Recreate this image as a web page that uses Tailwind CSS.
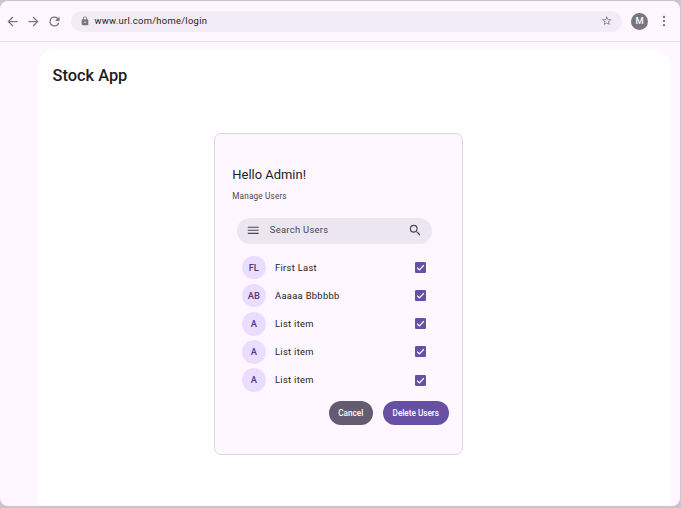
<!DOCTYPE html>
<html lang="en">
<head>
<meta charset="utf-8">
<title>Stock App</title>
<script src="https://cdn.jsdelivr.net/npm/@tailwindcss/browser@4"></script>
</head>
<body class="h-[508px] w-[681px] overflow-hidden bg-[#cac4d0] pt-px font-['Roboto',sans-serif] text-[#1d1b20]">
<div class="flex h-[505px] w-[680px] flex-col overflow-hidden rounded-[8px] bg-[#fef7ff]">
  <header class="flex h-[41px] shrink-0 items-center border-b border-[#e3dce8] pl-[5px] text-[#79747e]">
    <svg class="size-[15px]" viewBox="0 0 24 24" fill="currentColor"><path d="M20 11H7.83l5.59-5.59L12 4l-8 8 8 8 1.41-1.41L7.83 13H20z"/></svg>
    <svg class="ml-[6px] size-[15px]" viewBox="0 0 24 24" fill="currentColor"><path d="m12 4-1.41 1.41L16.17 11H4v2h12.17l-5.58 5.59L12 20l8-8z"/></svg>
    <svg class="ml-[6px] size-[15px]" viewBox="0 0 24 24" fill="currentColor"><path d="M17.65 6.35A7.96 7.96 0 0 0 12 4a8 8 0 1 0 7.73 10h-2.08A6 6 0 1 1 12 6c1.66 0 3.14.69 4.22 1.78L13 11h7V4z"/></svg>
    <div class="ml-[9px] flex h-[21px] w-[551px] items-center rounded-full bg-[#f2ecf6] pr-[9.5px] pl-[9px]">
      <svg class="size-[10px]" viewBox="0 0 24 24" fill="currentColor"><path fill-rule="evenodd" d="M18 8h-1V6A5 5 0 0 0 7 6v2H6a2 2 0 0 0-2 2v10c0 1.1.9 2 2 2h12a2 2 0 0 0 2-2V10a2 2 0 0 0-2-2zm-6 9a2 2 0 1 1 0-4 2 2 0 0 1 0 4zm3.1-9H8.9V6a3.1 3.1 0 0 1 6.2 0z"/></svg>
      <span class="ml-[4.4px] text-[9.4px] leading-none tracking-[0.29px] text-[#1d1b20]">www.url.com/home/login</span>
      <svg class="ml-auto size-[11.5px]" viewBox="0 0 24 24" fill="currentColor"><path d="m22 9.24-7.19-.62L12 2 9.19 8.63 2 9.24l5.46 4.73L5.82 21 12 17.27 18.18 21l-1.63-7.03zM12 15.4l-3.76 2.27 1-4.28-3.32-2.88 4.38-.38L12 6.1l1.71 4.04 4.38.38-3.32 2.88 1 4.28z"/></svg>
    </div>
    <div class="ml-[9px] flex size-[17px] items-center justify-center rounded-full bg-[#79747e] text-[9.4px] leading-none font-medium text-[#fef7ff]">M</div>
    <svg class="ml-[9px] size-[14px]" viewBox="0 0 24 24" fill="currentColor"><circle cx="12" cy="5" r="2"/><circle cx="12" cy="12" r="2"/><circle cx="12" cy="19" r="2"/></svg>
  </header>
  <main class="mt-[7px] mr-[9px] ml-[38px] flex h-[456px] flex-col rounded-t-[17px] rounded-b-[3px] bg-white">
    <h1 class="mt-[15px] ml-[14.5px] text-[16.4px] leading-[24px] font-medium">Stock App</h1>
    <section class="mt-[45px] ml-[176px] flex h-[322px] w-[249px] flex-col rounded-[7px] border border-[#ddd6e2] bg-[#fef7ff] pt-[32px]">
      <h2 class="ml-[17.3px] text-[12.95px] leading-[18px]">Hello Admin!</h2>
      <p class="ml-[17.3px] mt-[6px] text-[8.2px] leading-[12px] tracking-[0.17px] text-[#49454f]">Manage Users</p>
      <div class="mt-[15.5px] ml-[22px] flex h-[26px] w-[194.5px] items-center rounded-full bg-[#ece6f0] pr-[9.5px] pl-[9px] text-[#49454f]">
        <svg class="size-[14.5px]" viewBox="0 0 24 24" fill="currentColor"><path d="M3 18h18v-2H3zm0-5h18v-2H3zm0-7v2h18V6z"/></svg>
        <span class="ml-[9.3px] pb-px text-[9.4px] leading-none tracking-[0.3px]">Search Users</span>
        <svg class="ml-auto size-[14.5px]" viewBox="0 0 24 24" fill="currentColor"><path d="M15.5 14h-.79l-.28-.27A6.471 6.471 0 0 0 16 9.5 6.5 6.5 0 1 0 9.5 16c1.61 0 3.09-.59 4.23-1.57l.27.28v.79l5 4.99L20.49 19zm-6 0a4.5 4.5 0 1 1 0-9 4.5 4.5 0 0 1 0 9z"/></svg>
      </div>
      <ul id="users" class="mt-[10px] ml-[27px] w-[184px]"></ul>
      <div class="mt-[7.2px] mr-[13px] flex justify-end gap-[9.5px] text-[8.2px] font-medium text-white">
        <button class="h-[24px] w-[44.5px] rounded-full bg-[#625b71] leading-none">Cancel</button>
        <button class="h-[24px] w-[66.5px] rounded-full bg-[#6750a4] leading-none">Delete Users</button>
      </div>
    </section>
  </main>
</div>
<script>
const users = [['FL', 'First Last'], ['AB', 'Aaaaa Bbbbbb'], ['A', 'List item'], ['A', 'List item'], ['A', 'List item']];
document.getElementById('users').innerHTML = users.map(([initials, name]) => `
  <li class="flex h-[28.15px] items-center">
    <span class="flex size-[23.5px] items-center justify-center rounded-full bg-[#eaddff] text-[9.4px] leading-none font-medium text-[#4f378b]">${initials}</span>
    <span class="ml-[9.5px] text-[9.4px] leading-none tracking-[0.3px]">${name}</span>
    <svg class="ml-auto size-[11px]" viewBox="0 0 18 18"><rect width="18" height="18" rx="2" fill="#6750a4"/><path d="m3.5 9.3 3.6 3.5 7.4-7.4" fill="none" stroke="#fff" stroke-width="2"/></svg>
  </li>`).join('');
</script>
</body>
</html>
